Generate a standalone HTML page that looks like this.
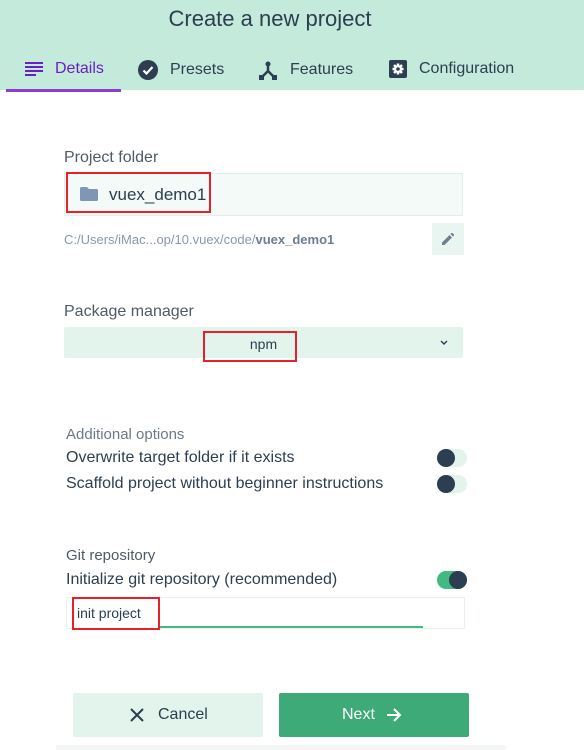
<!DOCTYPE html><html><head><style>
body{margin:0;width:584px;height:750px;background:#fff;font-family:"Liberation Sans",sans-serif;position:relative;overflow:hidden;color:#2c3e50}
.a{position:absolute}
.hdr{left:0;top:0;width:584px;height:90px;background:#c4eadc}
.tab{top:60px;font-size:16px;color:#2c3e50;display:flex;align-items:center;gap:12px}
.lbl{font-size:16px;color:#4f5b66}
.red{border:2px solid #e8202a;box-sizing:border-box}
.tg{width:30px;height:18px;border-radius:9px;background:#e3f4ec}
.tg i{position:absolute;top:0;width:18px;height:18px;border-radius:50%;background:#2c3e50}
</style></head><body>
<div class="a hdr"></div>
<div class="a" style="left:0;width:540px;top:6px;text-align:center;font-size:22px;color:#2c3e50">Create a new project</div>
<div class="a tab" style="left:25px;color:#6a1fc0"><svg width="18" height="14"><rect x="0" y="0" width="18" height="2" fill="#6a1fc0"/><rect x="0" y="4" width="18" height="2" fill="#6a1fc0"/><rect x="0" y="8" width="18" height="2" fill="#6a1fc0"/><rect x="0" y="12" width="11" height="2" fill="#6a1fc0"/></svg>Details</div>
<div class="a" style="left:6px;top:89px;width:115px;height:3px;background:#8a3fd1"></div>
<div class="a tab" style="left:138px"><svg width="20" height="20"><circle cx="10" cy="10" r="10" fill="#2c3e50"/><path d="M5.5 10.5l3 3 6-6.5" stroke="#fff" stroke-width="2.2" fill="none"/></svg>Presets</div>
<div class="a tab" style="left:258px"><svg width="20" height="20"><circle cx="10" cy="4" r="2.5" fill="#2c3e50"/><path d="M10 5v6M10 11l-6 6M10 11l6 6" stroke="#2c3e50" stroke-width="2.5" fill="none"/><rect x="1" y="15" width="5" height="5" fill="#2c3e50"/><rect x="14" y="15" width="5" height="5" fill="#2c3e50"/></svg>Features</div>
<div class="a tab" style="left:389px"><svg width="18" height="18"><rect width="18" height="18" rx="2" fill="#2c3e50"/><g stroke="#fff" stroke-width="2.5"><path d="M9 3.5v11M3.5 9h11M5 5l8 8M13 5l-8 8"/></g><circle cx="9" cy="9" r="4" fill="#fff"/><circle cx="9" cy="9" r="1.8" fill="#2c3e50"/></svg>Configuration</div>

<div class="a lbl" style="left:64px;top:149px">Project folder</div>
<div class="a" style="left:64px;top:173px;width:399px;height:43px;background:#f3faf7;border:1px solid #e0f0e8;box-sizing:border-box"></div>
<div class="a red" style="left:66px;top:172px;width:145px;height:41px"></div>
<svg class="a" style="left:80px;top:187px" width="18" height="14"><path d="M0 1.5Q0 0 1.5 0H7l2 2h7.5Q18 2 18 3.5V12.5Q18 14 16.5 14H1.5Q0 14 0 12.5Z" fill="#7f97b2"/></svg>
<div class="a" style="left:109px;top:185px;font-size:17px;color:#2c3e50">vuex_demo1</div>
<div class="a" style="left:64px;top:232px;font-size:13px;color:#8a99a8">C:/Users/iMac...op/10.vuex/code/<b style="color:#6d7f91">vuex_demo1</b></div>
<div class="a" style="left:432px;top:223px;width:32px;height:32px;background:#e9f5f0;border-radius:2px"></div>
<svg class="a" style="left:442px;top:233px" width="12" height="12"><path d="M0 12V9.5L7.5 2l2.5 2.5L2.5 12Z M8.5 1L10 -0.5 12.5 2 11 3.5Z" fill="#6d7f91"/></svg>

<div class="a lbl" style="left:64px;top:303px">Package manager</div>
<div class="a" style="left:64px;top:327px;width:399px;height:31px;background:#e3f4ec;border-radius:2px"></div>
<div class="a" style="left:0;width:527px;top:336px;text-align:center;font-size:14px;color:#2c3e50">npm</div>
<div class="a red" style="left:203px;top:331px;width:94px;height:31px"></div>
<svg class="a" style="left:440px;top:340px" width="8" height="6"><path d="M1 1l3 3 3-3" stroke="#2c3e50" stroke-width="1.4" fill="none"/></svg>

<div class="a" style="left:66px;top:426px;font-size:15px;color:#6b7a88">Additional options</div>
<div class="a" style="left:66px;top:449px;font-size:16px">Overwrite target folder if it exists</div>
<div class="a" style="left:66px;top:475px;font-size:16px">Scaffold project without beginner instructions</div>
<div class="a tg" style="left:437px;top:449px"><i style="left:0"></i></div>
<div class="a tg" style="left:437px;top:475px"><i style="left:0"></i></div>

<div class="a" style="left:66px;top:547px;font-size:15px;color:#4f5b66">Git repository</div>
<div class="a" style="left:66px;top:571px;font-size:16px">Initialize git repository (recommended)</div>
<div class="a tg" style="left:437px;top:571px;background:#42b983"><i style="left:12px"></i></div>
<div class="a" style="left:66px;top:597px;width:399px;height:32px;border:1px solid #e6f2ec;box-sizing:border-box"></div>
<div class="a" style="left:77px;top:626px;width:346px;height:2px;background:#42b983"></div>
<div class="a red" style="left:72px;top:597px;width:88px;height:33px;background:#fff"></div>
<div class="a" style="left:77px;top:605px;font-size:14px;color:#2c3e50">init project</div>

<div class="a" style="left:73px;top:693px;width:190px;height:44px;background:#e3f4ec;border-radius:2px"></div>
<svg class="a" style="left:130px;top:708px" width="14" height="14"><path d="M1 1l12 12M13 1L1 13" stroke="#2c3e50" stroke-width="2"/></svg>
<div class="a" style="left:158px;top:706px;font-size:16px">Cancel</div>
<div class="a" style="left:279px;top:693px;width:190px;height:44px;background:#3eaa78;border-radius:2px"></div>
<div class="a" style="left:342px;top:706px;font-size:16px;color:#fff">Next</div>
<svg class="a" style="left:386px;top:707px" width="16" height="16"><path d="M1 8h13M8 2l6 6-6 6" stroke="#fff" stroke-width="2" fill="none"/></svg>
<div class="a" style="left:56px;top:745px;width:450px;height:5px;background:#f4f6f5"></div>
</body></html>
